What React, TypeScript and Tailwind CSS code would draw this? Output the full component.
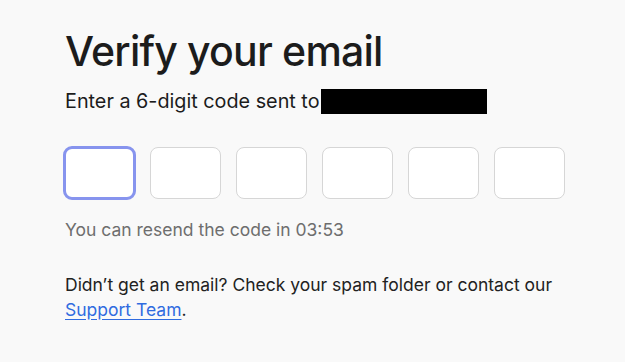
import React from "react";

export default function App() {
  return (
    <div
      className="min-h-[362px] w-full bg-[#f9f9f9] text-[#1c1c1c] px-[65px] pt-[25px]"
      style={{ fontFamily: "Inter, 'Noto Sans', sans-serif" }}
    >
      <h1 className="text-[41px] font-medium leading-[52px] tracking-[-0.8px]">
        Verify your email
      </h1>
      <p className="mt-[11px] text-[19.8px] leading-[26px] flex items-center">
        Enter a 6-digit code sent to
        <span className="inline-block ml-[1px] w-[166px] h-[25px] bg-black"></span>
      </p>
      <div className="mt-[32px] flex items-center gap-[15px] -ml-[1px]">
        {[0, 1, 2, 3, 4, 5].map((i) => (
          <input
            key={i}
            type="text"
            maxLength={1}
            className={`rounded-[8px] bg-white outline-none ${
              i === 0
                ? "h-[54px] w-[73px] -mx-[1px] border-[3px] border-[#8794ee] rounded-[9px]"
                : "h-[52px] w-[71px] border border-[#d6d6d6]"
            }`}
          />
        ))}
      </div>
      <p className="mt-[18px] text-[17.5px] leading-[24px] text-[#6e6e6e]">
        You can resend the code in 03:53
      </p>
      <p className="mt-[30px] text-[17.5px] leading-[25px] text-[#222]">
        Didn’t get an email? Check your spam folder or contact our
        <br />
        <a href="#" className="text-[#2f6be0] underline underline-offset-[3px]">
          Support Team
        </a>
        .
      </p>
    </div>
  );
}
